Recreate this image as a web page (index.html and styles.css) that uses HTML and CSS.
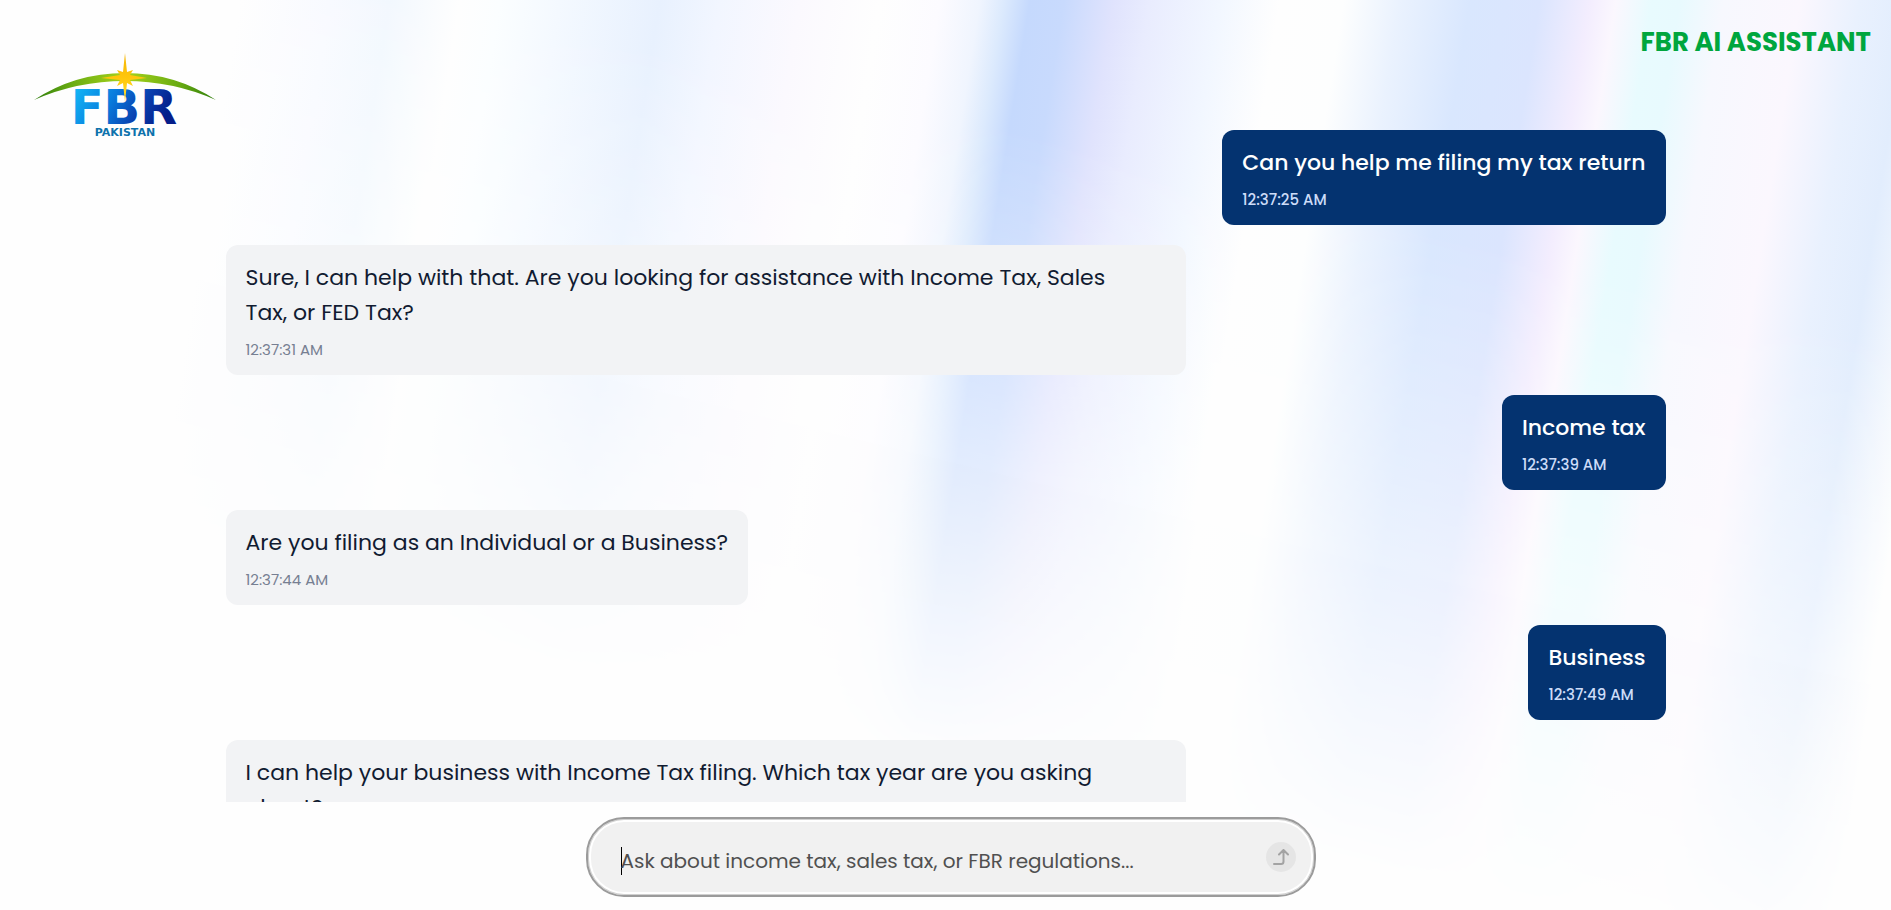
FILE: index.html
```
<!DOCTYPE html>
<html lang="en">
<head>
    <meta charset="UTF-8">
    <meta name="viewport" content="width=device-width, initial-scale=1.0">
    <title>FBR AI Assistant</title>
    <link rel="stylesheet" href="styles.css">
</head>
<body>

    <!-- Background light streaks -->
    <svg class="backdrop" viewBox="0 0 1891 910" preserveAspectRatio="none" aria-hidden="true">
        <defs>
            <linearGradient id="streaks" gradientUnits="userSpaceOnUse" x1="0" y1="0" x2="2000" y2="0">
                <stop offset="0.12" stop-color="#fefefe"/>
                <stop offset="0.165" stop-color="#f8faff"/>
                <stop offset="0.195" stop-color="#f2f8fe"/>
                <stop offset="0.23" stop-color="#fefefe"/>
                <stop offset="0.25" stop-color="#fbfeff"/>
                <stop offset="0.28" stop-color="#f4f9ff"/>
                <stop offset="0.33" stop-color="#e8f1fe"/>
                <stop offset="0.36" stop-color="#f2f6ff"/>
                <stop offset="0.4" stop-color="#fbf9fe"/>
                <stop offset="0.44" stop-color="#fefefe"/>
                <stop offset="0.47" stop-color="#fcfbff"/>
                <stop offset="0.49" stop-color="#f0f5fe"/>
                <stop offset="0.502" stop-color="#dceafd"/>
                <stop offset="0.515" stop-color="#c5d9fd"/>
                <stop offset="0.532" stop-color="#c8dafd"/>
                <stop offset="0.557" stop-color="#e0e3fd"/>
                <stop offset="0.575" stop-color="#e9ecfe"/>
                <stop offset="0.61" stop-color="#f2f7ff"/>
                <stop offset="0.64" stop-color="#fefefe"/>
                <stop offset="0.672" stop-color="#fdfefe"/>
                <stop offset="0.7" stop-color="#eaf2fe"/>
                <stop offset="0.735" stop-color="#d9e7fe"/>
                <stop offset="0.77" stop-color="#dbe5fe"/>
                <stop offset="0.795" stop-color="#f3edfe"/>
                <stop offset="0.808" stop-color="#fbf7fe"/>
                <stop offset="0.826" stop-color="#e8fbfe"/>
                <stop offset="0.84" stop-color="#e8fafe"/>
                <stop offset="0.862" stop-color="#f7f8fe"/>
                <stop offset="0.9" stop-color="#fbf7fe"/>
                <stop offset="0.93" stop-color="#e9f1fe"/>
                <stop offset="0.955" stop-color="#e2edfd"/>
                <stop offset="0.99" stop-color="#fefefe"/>
            </linearGradient>
            <linearGradient id="fadeDown" gradientUnits="userSpaceOnUse" x1="900" y1="100" x2="750" y2="720">
                <stop offset="0" stop-color="#fff"/>
                <stop offset="0.4" stop-color="#fff" stop-opacity="0.65"/>
                <stop offset="0.8" stop-color="#fff" stop-opacity="0.2"/>
                <stop offset="1" stop-color="#fff" stop-opacity="0"/>
            </linearGradient>
            <mask id="fade" maskUnits="userSpaceOnUse" x="0" y="0" width="1891" height="910">
                <rect width="1891" height="910" fill="url(#fadeDown)"/>
            </mask>
        </defs>
        <g mask="url(#fade)">
            <rect width="2100" height="910" fill="url(#streaks)" transform="skewX(-9)"/>
        </g>
    </svg>

    <header class="header">
        <a href="#" class="logo" aria-label="FBR Pakistan">
            <svg width="184" height="86" viewBox="0 0 184 86">
                <defs>
                    <linearGradient id="arc" x1="0" x2="1">
                        <stop offset="0" stop-color="#2f7d0c"/>
                        <stop offset="0.2" stop-color="#68ab12"/>
                        <stop offset="0.5" stop-color="#a5d31b"/>
                        <stop offset="0.8" stop-color="#68ab12"/>
                        <stop offset="1" stop-color="#2f7d0c"/>
                    </linearGradient>
                    <linearGradient id="letters" x1="0" x2="1" y1="0" y2="0.3">
                        <stop offset="0" stop-color="#15c3fb"/>
                        <stop offset="0.45" stop-color="#087cdd"/>
                        <stop offset="0.75" stop-color="#0a3fae"/>
                        <stop offset="1" stop-color="#051e8a"/>
                    </linearGradient>
                    <linearGradient id="star" x1="0" x2="0" y1="0" y2="1">
                        <stop offset="0" stop-color="#f5b60a"/>
                        <stop offset="0.5" stop-color="#ffc60b"/>
                        <stop offset="1" stop-color="#ffe22e"/>
                    </linearGradient>
                </defs>
                <path d="M1 47Q42 20 92 20Q142 20 183 47Q140 28 92 28Q44 28 1 47Z" fill="url(#arc)"/>
                <text class="logo-name" x="91" y="71" text-anchor="middle" fill="url(#letters)">FBR</text>
                <text class="logo-country" x="92" y="83" text-anchor="middle">PAKISTAN</text>
                <path d="M92 0L94 19L100 17L97 22L114 25L97 27L100 33L94 30L92 49L90 30L84 33L87 27L68 25L87 22L84 17L90 19Z" fill="url(#star)"/>
            </svg>
        </a>
        <h1 class="title">FBR AI ASSISTANT</h1>
    </header>

    <main class="messages">
        <div class="message user">
            <p class="text">Can you help me filing my tax return</p>
            <time class="time">12:37:25 AM</time>
        </div>
        <div class="message bot">
            <p class="text">Sure, I can help with that. Are you looking for assistance with Income Tax, Sales Tax,&nbsp;or FED Tax?</p>
            <time class="time">12:37:31 AM</time>
        </div>
        <div class="message user">
            <p class="text">Income tax</p>
            <time class="time">12:37:39 AM</time>
        </div>
        <div class="message bot">
            <p class="text">Are you filing as an Individual or a Business?</p>
            <time class="time">12:37:44 AM</time>
        </div>
        <div class="message user">
            <p class="text">Business</p>
            <time class="time">12:37:49 AM</time>
        </div>
        <div class="message bot">
            <p class="text">I can help your business with Income Tax filing. Which tax year are you asking about?</p>
            <time class="time">12:37:54 AM</time>
        </div>
    </main>

    <footer class="footer">
        <form class="ask-form">
            <input type="text" class="ask-input" aria-label="Your question" placeholder="Ask about income tax, sales tax, or FBR regulations..." autofocus>
            <button type="submit" class="send-btn" aria-label="Send" disabled>
                <svg width="16" height="16" viewBox="0 0 16 16" fill="none" stroke="currentColor" stroke-width="2" stroke-linecap="round" stroke-linejoin="round">
                    <path d="M1 15H8Q10.500 15 10.500 12.500V1M6 5.500L10.500 1L15 5.500"/>
                </svg>
            </button>
        </form>
    </footer>

</body>
</html>
```
FILE: styles.css
```
* {
    box-sizing: border-box;
}
body {
    margin: 0;
    height: 100vh;
    display: flex;
    flex-direction: column;
    overflow: hidden;
    background: #fefefe;
    font-family: Poppins, Inter, sans-serif;
}
.backdrop {
    position: absolute;
    inset: 0;
    width: 100%;
    height: 100%;
    z-index: -1;
}
.header {
    display: flex;
    justify-content: space-between;
    align-items: flex-start;
    height: 130px;
    flex-shrink: 0;
    padding: 24px 20px 0 33px;
}
.logo {
    margin-top: 29px;
}
.logo svg {
    display: block;
}
.logo-name {
    font: bold 48px "DejaVu Sans", sans-serif;
}
.logo-country {
    font: bold 11px "DejaVu Sans", sans-serif;
    fill: #0e72ac;
}
.title {
    margin: 0;
    font-size: 26px;
    line-height: 36px;
    font-weight: 700;
    color: #00a63e;
}
.messages {
    flex: 1;
    min-height: 0;
    overflow: hidden;
    display: flex;
    flex-direction: column;
    align-items: flex-start;
    gap: 20px;
    width: 100%;
    max-width: 1440px;
    margin: 0 auto;
}
.message {
    max-width: 960px;
    flex-shrink: 0;
    padding: 15px 20px;
    border-radius: 12px;
}
.text {
    margin: 0;
    font-size: 22px;
    line-height: 35px;
}
.time {
    display: block;
    margin-top: 10px;
    font-size: 15px;
    line-height: 20px;
}
.user {
    align-self: flex-end;
    background: #043370;
    color: white;
    font-weight: 500;
}
.user .time {
    color: #cddcf8;
}
.bot {
    background: #f2f3f5;
    color: #111b31;
}
.bot .time {
    color: #777f92;
}
.footer {
    flex-shrink: 0;
    padding: 15px 20px 13px 30px;
}
.ask-form {
    display: flex;
    align-items: center;
    width: 100%;
    max-width: 730px;
    height: 80px;
    margin: 0 auto;
    padding: 0 18px 0 33px;
    background: #f1f1f1;
    border: 2px solid #9b9b9b;
    border-radius: 38px;
    box-shadow: inset 0 0 0 1px #d0d0d0, inset 0 0 0 3px white;
}
.ask-input {
    flex: 1;
    min-width: 0;
    height: 42px;
    padding: 8px 0 0;
    border: none;
    outline: none;
    background: none;
    font: inherit;
    font-size: 20px;
    color: black;
}
/* text cursor of the empty box */
.ask-input:placeholder-shown {
    background: linear-gradient(black, black) 0 11px / 1px 28px no-repeat;
    caret-color: transparent;
}
.ask-input::placeholder {
    color: #505050;
}
.send-btn {
    display: flex;
    align-items: center;
    justify-content: center;
    width: 30px;
    height: 30px;
    padding: 0;
    border: none;
    border-radius: 50%;
    background: #e5e5e5;
    color: #a3a3a3;
}
```
